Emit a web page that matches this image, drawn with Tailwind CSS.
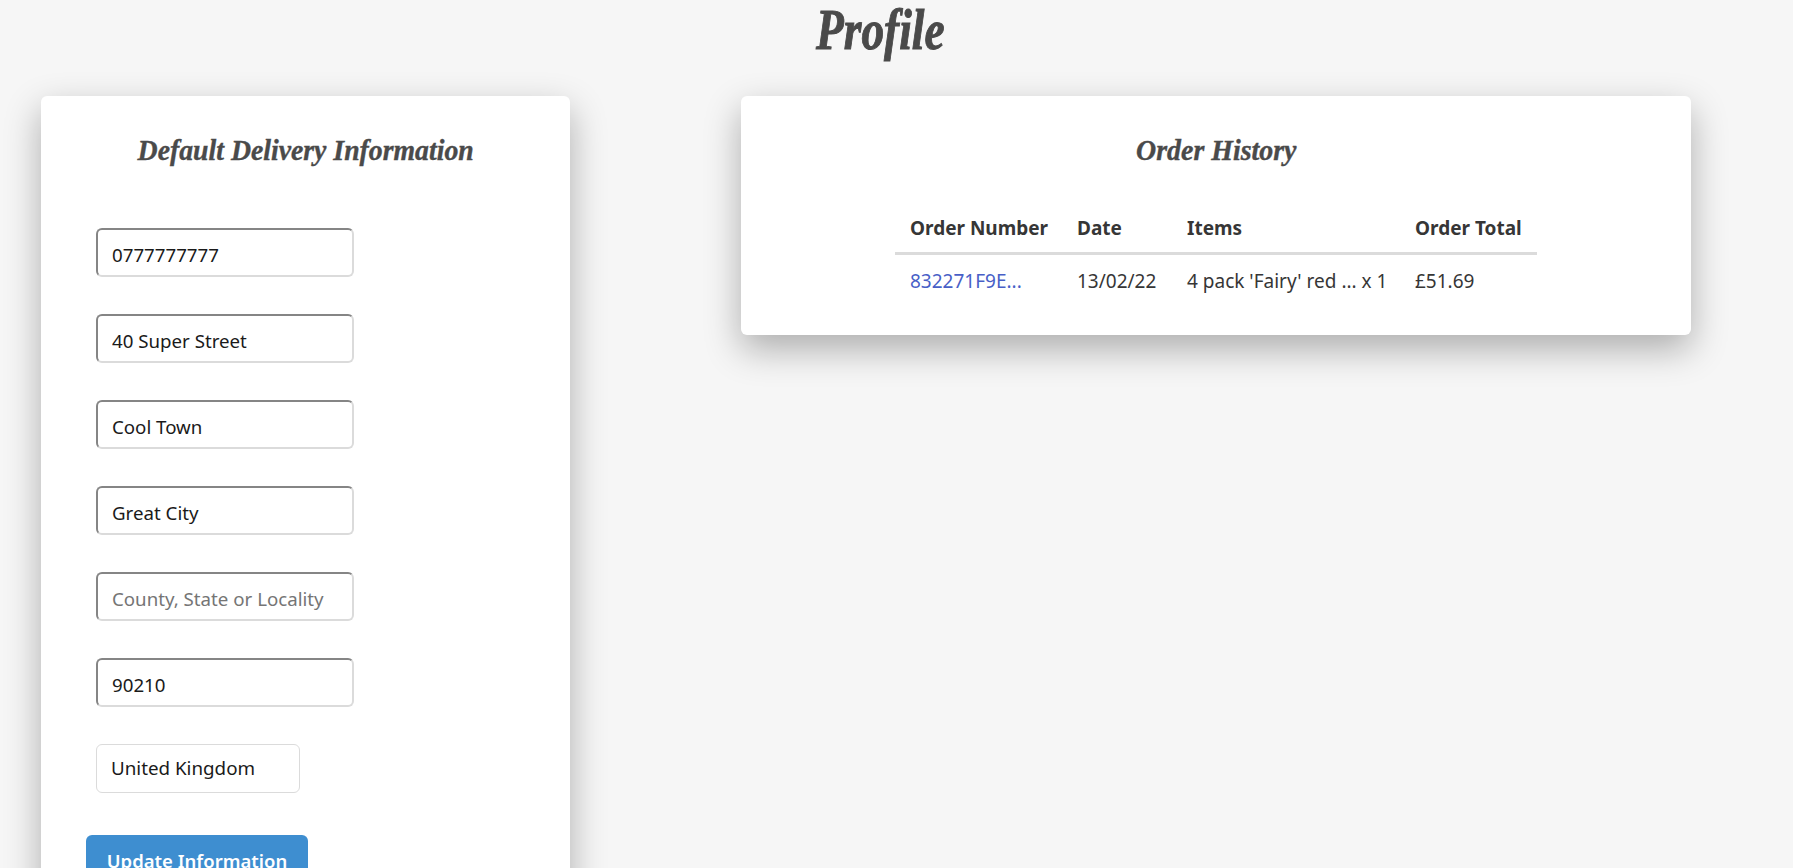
<!DOCTYPE html>
<html lang="en">
<head>
<meta charset="utf-8">
<title>Profile</title>
<script src="https://cdn.jsdelivr.net/npm/@tailwindcss/browser@4"></script>
</head>
<body class="h-screen overflow-hidden bg-[#f6f6f6] font-['Noto_Sans',sans-serif] text-[19px] text-[#4a4a4a]">
  <h1 class="h-[96px] pr-[32px] text-center font-['Liberation_Serif',serif] text-[56px] leading-[60px] font-bold text-[#4a4a4a] italic"><span class="inline-block scale-x-[0.81] [-webkit-text-stroke:1px_#4a4a4a]">Profile</span></h1>
  <main class="flex items-start gap-[171px] pl-[41px]">
    <section class="w-[529px] shrink-0 rounded-md bg-white pt-[30px] pb-[40px] shadow-[0_14px_36px_rgba(0,0,0,0.3)]">
      <h2 class="text-center font-['Liberation_Serif',serif] text-[30px] leading-[48px] font-bold italic"><span class="inline-block scale-x-[0.925] [-webkit-text-stroke:0.4px_#4a4a4a]">Default Delivery Information</span></h2>
      <form class="mt-[54px] flex flex-col items-start pl-[55px]">
        <input class="box-border h-[49px] w-[258px] rounded-md border-2 border-t-[#858585] border-r-[#dbdbdb] border-b-[#dbdbdb] border-l-[#858585] bg-white px-[14px] pt-[3px] text-[18.7px] text-[#1a1a1a]" value="0777777777">
        <input class="mt-[37px] box-border h-[49px] w-[258px] rounded-md border-2 border-t-[#858585] border-r-[#dbdbdb] border-b-[#dbdbdb] border-l-[#858585] bg-white px-[14px] pt-[3px] text-[18.7px] text-[#1a1a1a]" value="40 Super Street">
        <input class="mt-[37px] box-border h-[49px] w-[258px] rounded-md border-2 border-t-[#858585] border-r-[#dbdbdb] border-b-[#dbdbdb] border-l-[#858585] bg-white px-[14px] pt-[3px] text-[18.7px] text-[#1a1a1a]" value="Cool Town">
        <input class="mt-[37px] box-border h-[49px] w-[258px] rounded-md border-2 border-t-[#858585] border-r-[#dbdbdb] border-b-[#dbdbdb] border-l-[#858585] bg-white px-[14px] pt-[3px] text-[18.7px] text-[#1a1a1a]" value="Great City">
        <input class="mt-[37px] box-border h-[49px] w-[258px] rounded-md border-2 border-t-[#858585] border-r-[#dbdbdb] border-b-[#dbdbdb] border-l-[#858585] bg-white px-[14px] pt-[3px] text-[18.7px] text-[#1a1a1a] placeholder:text-[#757575]" placeholder="County, State or Locality">
        <input class="mt-[37px] box-border h-[49px] w-[258px] rounded-md border-2 border-t-[#858585] border-r-[#dbdbdb] border-b-[#dbdbdb] border-l-[#858585] bg-white px-[14px] pt-[3px] text-[18.7px] text-[#1a1a1a]" value="90210">
        <div class="mt-[37px] box-border flex h-[49px] w-[204px] items-center rounded-md border border-[#dbdbdb] bg-white px-[14px] text-[18.8px] text-[#1a1a1a]">United Kingdom</div>
        <button type="button" class="mt-[42px] -ml-[10px] box-border h-[52px] w-[222px] rounded-md bg-[#3e8ed0] text-center text-[18.5px] font-semibold text-white">Update Information</button>
      </form>
    </section>
    <section class="h-[239px] w-[950px] shrink-0 rounded-md bg-white pt-[30px] shadow-[0_14px_36px_rgba(0,0,0,0.3)]">
      <h2 class="text-center font-['Liberation_Serif',serif] text-[30px] leading-[48px] font-bold italic"><span class="inline-block scale-x-[0.93] [-webkit-text-stroke:0.4px_#4a4a4a]">Order History</span></h2>
      <table class="mt-[30px] ml-[154px] w-[642px] table-fixed border-collapse text-[#363636]">
        <colgroup>
          <col class="w-[167px]">
          <col class="w-[110px]">
          <col class="w-[228px]">
          <col class="w-[137px]">
        </colgroup>
        <thead>
          <tr class="border-b-[3px] border-[#dbdbdb]">
            <th class="h-[49px] px-[15px] text-left font-bold whitespace-nowrap">Order Number</th>
            <th class="px-[15px] text-left font-bold">Date</th>
            <th class="px-[15px] text-left font-bold">Items</th>
            <th class="px-[15px] text-left font-bold whitespace-nowrap">Order Total</th>
          </tr>
        </thead>
        <tbody>
          <tr>
            <td class="h-[54px] px-[15px]"><a href="#" class="text-[#485fc7]">832271F9E...</a></td>
            <td class="px-[15px]">13/02/22</td>
            <td class="px-[15px] whitespace-nowrap">4 pack 'Fairy' red ... x 1</td>
            <td class="px-[15px]">£51.69</td>
          </tr>
        </tbody>
      </table>
    </section>
  </main>
</body>
</html>
